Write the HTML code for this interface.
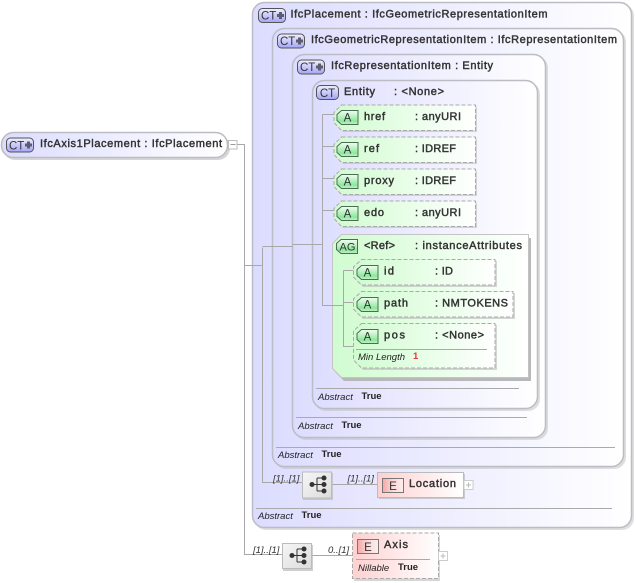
<!DOCTYPE html>
<html><head><meta charset="utf-8"><style>
html,body{margin:0;padding:0;background:#fff;width:636px;height:583px;overflow:hidden}
svg{display:block;position:absolute;left:0;top:0}
text{font-family:"Liberation Sans",sans-serif}
.n{font-size:11px;fill:#333;stroke:#333;stroke-width:.45}
.k{font-size:9.5px;font-style:italic;fill:#222}
.v{font-size:9.5px;font-weight:bold;fill:#222}
.c{font-size:9.5px;font-style:italic;fill:#333}
.sh{fill:#b9b9b9;opacity:.45}
.bx{stroke:#bcbcc4;stroke-width:1.5}
.sep{stroke:#aaa;stroke-width:1}
.w{stroke:#a8a8a8;stroke-width:1;fill:none}
.i{font-size:11.5px;fill:#333}
</style></head><body>
<svg width="636" height="583" viewBox="0 0 636 583" xmlns="http://www.w3.org/2000/svg">
<defs>
<linearGradient id="ct" x1="0" x2="1" y1="0" y2="0"><stop offset="0" stop-color="#dcdcff"/><stop offset="1" stop-color="#ffffff"/></linearGradient>
<linearGradient id="g" x1="0" x2="1" y1="0" y2="0"><stop offset="0" stop-color="#d0fcd0"/><stop offset="1" stop-color="#ffffff"/></linearGradient>
<linearGradient id="r" x1="0" x2="1" y1="0" y2="0"><stop offset="0" stop-color="#ffd0d0"/><stop offset="1" stop-color="#ffffff"/></linearGradient>
<linearGradient id="ib" x1="0" x2="0" y1="0" y2="1"><stop offset="0" stop-color="#f0f0ff"/><stop offset="1" stop-color="#a4a4f6"/></linearGradient>
<linearGradient id="ig" x1="0" x2="0" y1="0" y2="1"><stop offset="0" stop-color="#f2fff2"/><stop offset=".75" stop-color="#8ce89c"/><stop offset="1" stop-color="#c4f4cc"/></linearGradient>
<linearGradient id="ir" x1="0" x2="1" y1="0" y2="0"><stop offset="0" stop-color="#f5a8a8"/><stop offset=".5" stop-color="#fbd8d8"/><stop offset="1" stop-color="#fdeeee"/></linearGradient>
<linearGradient id="sq" x1="0" x2="1" y1="0" y2="1"><stop offset="0" stop-color="#f6f6f6"/><stop offset="1" stop-color="#dcdcdc"/></linearGradient>
<g id="ctp"><rect x=".5" y=".5" width="27" height="14" rx="4" fill="url(#ib)" stroke="#555"/><path d="M19 7.500h7M22.500 4v7" stroke="#5c5c6c" stroke-width="3"/></g>
<g id="seq"><circle cx="8" cy="13" r="2.500" fill="#333"/><path d="M8 13h7M13 6.500v13M13 6.500h7M13 13h7M13 19.500h7" stroke="#333" fill="none"/><circle cx="20" cy="6.500" r="2.500" fill="#333"/><circle cx="20" cy="13" r="2.500" fill="#333"/><circle cx="20" cy="19.500" r="2.500" fill="#333"/></g>
<path id="attr" d="M8 .5H142V26H8L.5 18V8Z"/>
<path id="ai" d="M5 .5H21.500V14.500H5L.5 10.500V4.500Z" fill="url(#ig)" stroke="#4f6b55"/>
</defs>

<!-- root -->
<rect x="3" y="135" width="227" height="25" rx="12" fill="#bbb" opacity=".6"/>
<rect x="1.500" y="132.500" width="226" height="25" rx="12" fill="url(#ct)" class="bx"/>
<use href="#ctp" x="6" y="137.500"/>
<text class="n" x="40" y="147" textLength="182" lengthAdjust="spacing">IfcAxis1Placement : IfcPlacement</text>
<rect x="228.500" y="140.500" width="8.500" height="8.500" fill="#fff" stroke="#bbb"/><path d="M230.500 144.500h5" stroke="#999"/>
<path class="w" d="M237 144.500H244.500V554.500H283M311 555.500H353"/>

<!-- box 1 -->
<rect x="254" y="4" width="380" height="526" rx="12" class="sh"/>
<rect x="252.500" y="2.500" width="379" height="525" rx="12" fill="url(#ct)" class="bx"/>
<use href="#ctp" x="258" y="8"/>
<text class="n" x="290.500" y="17.500" textLength="257" lengthAdjust="spacing">IfcPlacement : IfcGeometricRepresentationItem</text>
<!-- box 2 -->
<rect x="274" y="30" width="352" height="439" rx="12" class="sh"/>
<rect x="272.500" y="28.500" width="351" height="438" rx="12" fill="url(#ct)" class="bx"/>
<use href="#ctp" x="277" y="33.500"/>
<text class="n" x="311" y="43" textLength="306" lengthAdjust="spacing">IfcGeometricRepresentationItem : IfcRepresentationItem</text>
<!-- box 3 -->
<rect x="294" y="56" width="254" height="384" rx="12" class="sh"/>
<rect x="292.500" y="54.500" width="253" height="383" rx="12" fill="url(#ct)" class="bx"/>
<use href="#ctp" x="297" y="59.500"/>
<text class="n" x="331" y="69" textLength="162" lengthAdjust="spacing">IfcRepresentationItem : Entity</text>
<!-- box 4 -->
<rect x="314" y="82" width="226" height="329" rx="12" class="sh"/>
<rect x="312.500" y="80.500" width="225" height="328" rx="12" fill="url(#ct)" class="bx"/>
<rect x="316.500" y="85.500" width="22" height="14" rx="4" fill="url(#ib)" stroke="#555"/>
<text class="i" x="327.500" y="97" text-anchor="middle">CT</text>
<text class="n" x="344" y="95" textLength="31" lengthAdjust="spacing">Entity</text>
<text class="n" x="394" y="95" textLength="50" lengthAdjust="spacing">: &lt;None&gt;</text>

<!-- connectors over boxes -->
<path class="w" d="M244.500 265.500H262.500M262.500 247.500V482.500H303M262.500 246.500H292.500M292.500 244.500H322.500M322.500 114.500V305.500H343.500M322.500 114.500H334M322.500 146.500H334M322.500 178.500H334M322.500 210.500H334"/>

<!-- attrs -->
<g fill="#bbb" opacity=".6"><use href="#attr" x="335" y="106"/><use href="#attr" x="335" y="138"/><use href="#attr" x="335" y="170"/><use href="#attr" x="335" y="202"/></g>
<g fill="url(#g)" stroke="#aaa" stroke-dasharray="4 2"><use href="#attr" x="333.500" y="104.500"/><use href="#attr" x="333.500" y="136.500"/><use href="#attr" x="333.500" y="168.500"/><use href="#attr" x="333.500" y="200.500"/></g>
<use href="#ai" x="336.500" y="110"/><use href="#ai" x="336.500" y="142"/><use href="#ai" x="336.500" y="174"/><use href="#ai" x="336.500" y="206"/>
<g class="i" text-anchor="middle"><text x="347.500" y="121.500">A</text><text x="347.500" y="153.500">A</text><text x="347.500" y="185.500">A</text><text x="347.500" y="217.500">A</text></g>
<text class="n" x="364" y="120" textLength="21" lengthAdjust="spacing">href</text><text class="n" x="415" y="120" textLength="46" lengthAdjust="spacing">: anyURI</text>
<text class="n" x="364" y="152" textLength="15" lengthAdjust="spacing">ref</text><text class="n" x="415" y="152" textLength="41" lengthAdjust="spacing">: IDREF</text>
<text class="n" x="364" y="184" textLength="30" lengthAdjust="spacing">proxy</text><text class="n" x="415" y="184" textLength="41" lengthAdjust="spacing">: IDREF</text>
<text class="n" x="364" y="216" textLength="20" lengthAdjust="spacing">edo</text><text class="n" x="415" y="216" textLength="46" lengthAdjust="spacing">: anyURI</text>

<!-- AG -->
<path d="M344 238H531V381H344L335 372V247Z" fill="#b8b8b8"/>
<path d="M341.500 234.500H528.500V377.500H341.500L332.500 368.500V243.500Z" fill="url(#g)" stroke="#c4c4c4"/>
<path d="M341 239.500H357.500V253.500H341L336.500 249.500V243.500Z" fill="url(#ig)" stroke="#4f6b55"/>
<text x="347.500" y="250.500" text-anchor="middle" style="font-size:11px;fill:#333">AG</text>
<text class="n" x="364" y="249" textLength="31" lengthAdjust="spacing">&lt;Ref&gt;</text><text class="n" x="415" y="249" textLength="107" lengthAdjust="spacing">: instanceAttributes</text>

<path class="w" d="M322.500 305.500H343.500M343.500 270.500V346.500H354M343.500 270.500H354M343.500 302.500H354"/>

<path d="M363 261H497V287H363L355 279V269Z" fill="#bbb" opacity=".6"/>
<path d="M361.500 259.500H495V285H361.500L353.500 277V267Z" fill="url(#g)" stroke="#aaa" stroke-dasharray="4 2"/>
<path d="M363 293H515V319H363L355 311V301Z" fill="#bbb" opacity=".6"/>
<path d="M361.500 291.500H513V317H361.500L353.500 309V299Z" fill="url(#g)" stroke="#aaa" stroke-dasharray="4 2"/>
<path d="M363 325H497V370H363L355 362V333Z" fill="#bbb" opacity=".6"/>
<path d="M361.500 323.500H495V368H361.500L353.500 360V331Z" fill="url(#g)" stroke="#aaa" stroke-dasharray="4 2"/>
<use href="#ai" x="356.500" y="265"/><use href="#ai" x="356.500" y="297"/><use href="#ai" x="356.500" y="329"/>
<g class="i" text-anchor="middle"><text x="367.500" y="276.500">A</text><text x="367.500" y="308.500">A</text><text x="367.500" y="340.500">A</text></g>
<text class="n" x="384" y="274.500" textLength="10" lengthAdjust="spacing">id</text><text class="n" x="435" y="274.500" textLength="18" lengthAdjust="spacing">: ID</text>
<text class="n" x="384" y="306.500" textLength="24" lengthAdjust="spacing">path</text><text class="n" x="435" y="306.500" textLength="73" lengthAdjust="spacing">: NMTOKENS</text>
<text class="n" x="384" y="338.500" textLength="21" lengthAdjust="spacing">pos</text><text class="n" x="435" y="338.500" textLength="49" lengthAdjust="spacing">: &lt;None&gt;</text>
<path class="sep" d="M356 349.500H487"/>
<text class="k" x="358" y="360">Min Length</text>
<text class="v" x="413" y="359" style="fill:#e33">1</text>

<!-- footers -->
<path class="sep" d="M316 388.500H519"/>
<text class="k" x="318" y="400">Abstract</text><text class="v" x="361.500" y="399">True</text>
<path class="sep" d="M296 417.500H527"/>
<text class="k" x="298" y="429">Abstract</text><text class="v" x="341.500" y="428">True</text>
<path class="sep" d="M276 447.500H615"/>
<text class="k" x="278" y="458">Abstract</text><text class="v" x="321.500" y="457">True</text>
<path class="sep" d="M256 508.500H612"/>
<text class="k" x="258" y="519">Abstract</text><text class="v" x="301.500" y="518">True</text>

<!-- location row -->
<path class="w" d="M331 484.500H378"/>
<text class="c" x="273" y="481.500">[1]..[1]</text>
<rect x="303" y="473" width="30" height="27" fill="#bbb" opacity=".7"/>
<rect x="302.500" y="472" width="29" height="26" fill="url(#sq)" stroke="#bbb"/>
<use href="#seq" x="304" y="471.500"/>
<text class="c" x="347.500" y="481.500">[1]..[1]</text>
<rect x="379" y="474" width="86" height="25" fill="#bbb" opacity=".7"/>
<rect x="377.500" y="472.500" width="86" height="25" fill="url(#r)" stroke="#bbb"/>
<rect x="382.500" y="478.500" width="21" height="14" fill="url(#ir)" stroke="#777"/>
<text class="i" x="393" y="490" text-anchor="middle">E</text>
<text class="n" x="409" y="487" textLength="47" lengthAdjust="spacing">Location</text>
<rect x="464" y="480.500" width="9" height="9" fill="#fff" stroke="#ccc"/><path d="M466 485h5M468.500 482.500v5" stroke="#bbb"/>

<!-- axis row -->
<text class="c" x="253" y="553">[1]..[1]</text>
<rect x="283" y="545" width="30" height="26" fill="#bbb" opacity=".7"/>
<rect x="282.500" y="543.500" width="29" height="25" fill="url(#sq)" stroke="#bbb"/>
<use href="#seq" x="284" y="542.500"/>
<text class="c" x="328" y="553">0..[1]</text>
<rect x="354" y="535" width="86" height="46" fill="#bbb" opacity=".6"/>
<rect x="352.500" y="533" width="86" height="45.500" fill="url(#r)" stroke="#aaa" stroke-dasharray="4 2"/>
<rect x="357.500" y="539.500" width="21" height="14" fill="url(#ir)" stroke="#777"/>
<text class="i" x="368" y="551" text-anchor="middle">E</text>
<text class="n" x="384" y="548" textLength="24" lengthAdjust="spacing">Axis</text>
<path class="sep" d="M356 559.500H430"/>
<text class="k" x="358" y="571">Nillable</text><text class="v" x="398" y="570">True</text>
<rect x="438.500" y="551.500" width="9" height="9" fill="#fff" stroke="#ccc"/><path d="M440.500 556h5M443 553.500v5" stroke="#bbb"/>

<!-- CT labels -->
<g class="i"><text x="9" y="149.500">CT</text><text x="261" y="19.500">CT</text><text x="280" y="45">CT</text><text x="300" y="71">CT</text></g>
</svg>
</body></html>
